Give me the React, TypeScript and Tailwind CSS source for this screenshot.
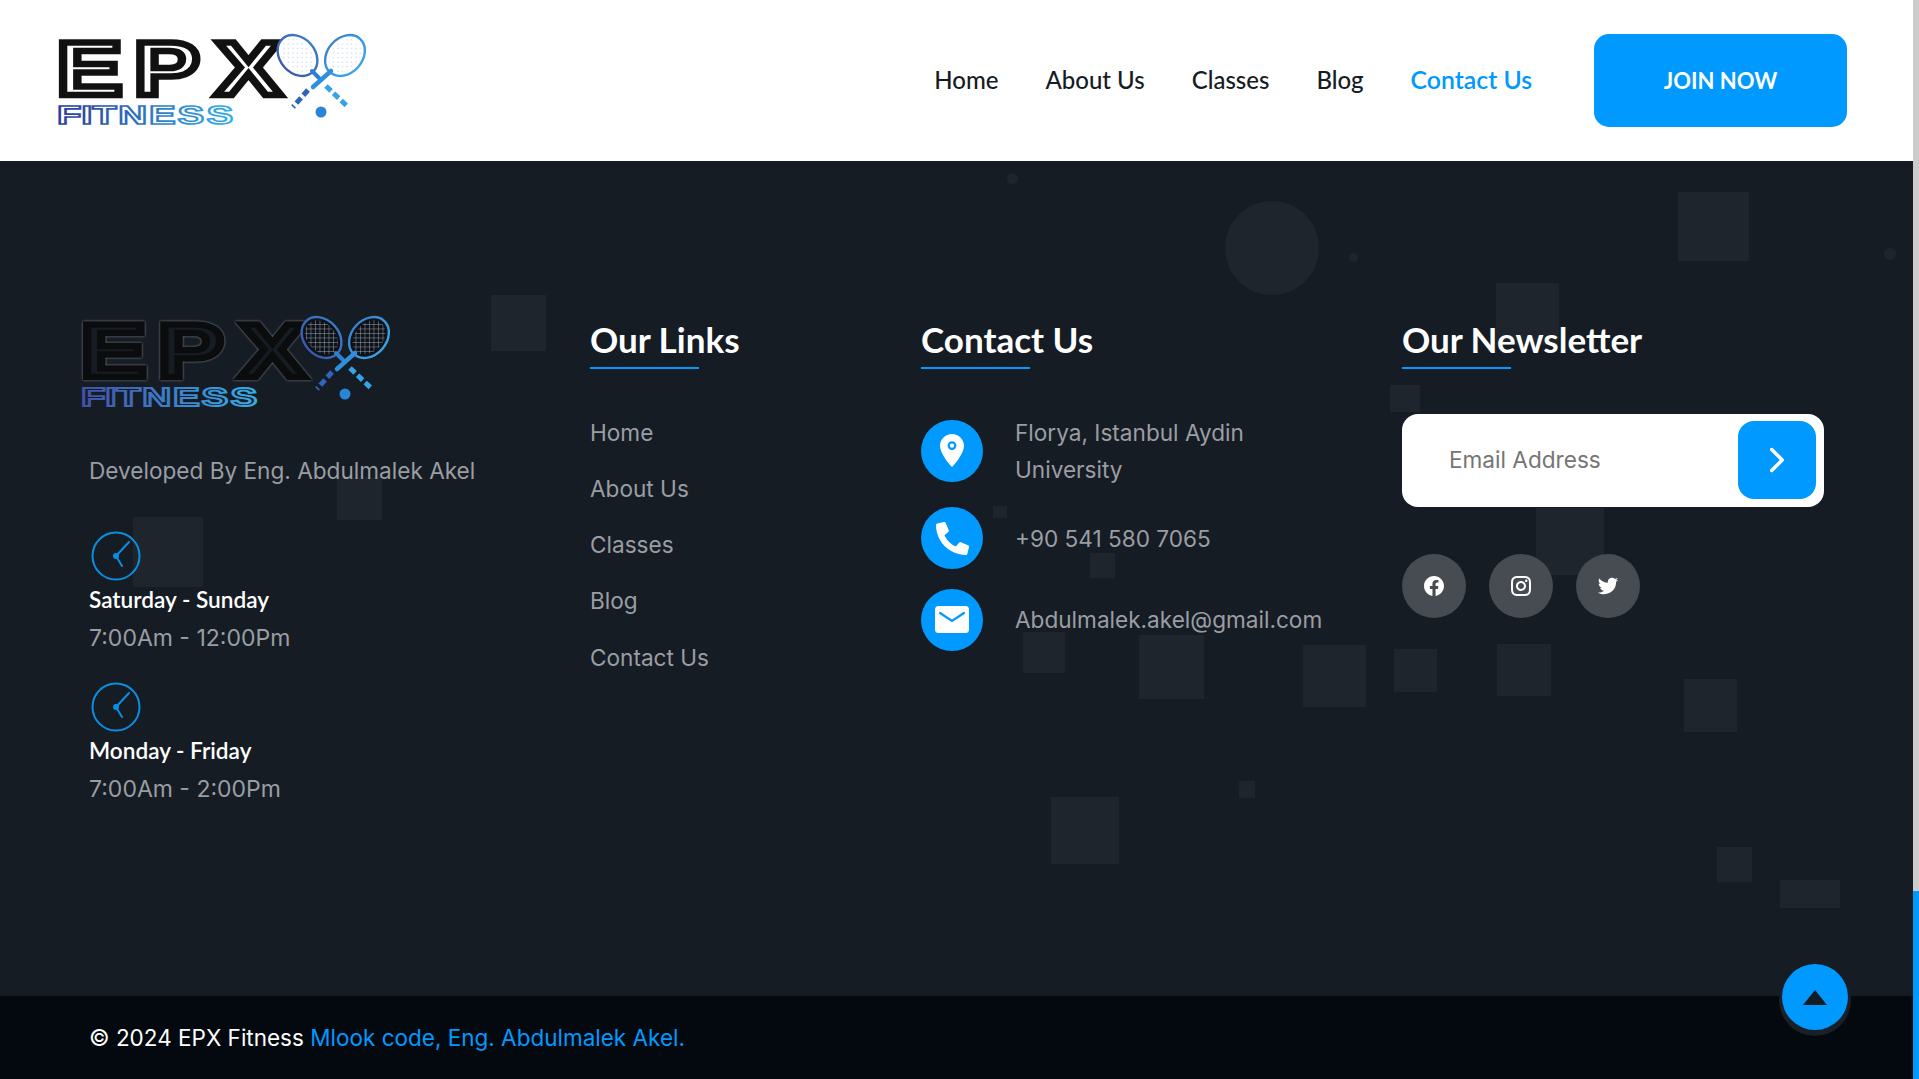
import { ChevronRight } from "lucide-react";
import { FaPhoneAlt } from "react-icons/fa";
import { RiFacebookCircleFill, RiInstagramLine, RiTwitterFill } from "react-icons/ri";

const navLinks = ["Home", "About Us", "Classes", "Blog"];
const footerLinks = ["Home", "About Us", "Classes", "Blog", "Contact Us"];
const body = "font-['Inter','Liberation_Sans',sans-serif]";
const display = "font-['Lato','Noto_Sans',sans-serif]";

// faint squares and dots behind the footer, placed on the section (top = y - 161)
const shapes = [
  "left-[1225px] top-[40px] size-[94px] rounded-full",
  "left-[1007px] top-[12px] size-[11px] rounded-full",
  "left-[1349px] top-[92px] size-[9px] rounded-full",
  "left-[1884px] top-[87px] size-[12px] rounded-full",
  "left-[1678px] top-[31px] w-[71px] h-[69px]",
  "left-[1496px] top-[122px] w-[63px] h-[62px]",
  "left-[491px] top-[134px] w-[55px] h-[56px]",
  "left-[337px] top-[316px] w-[45px] h-[43px]",
  "left-[133px] top-[356px] size-[70px]",
  "left-[1390px] top-[224px] w-[30px] h-[27px]",
  "left-[993px] top-[345px] w-[14px] h-[12px]",
  "left-[1090px] top-[392px] size-[25px]",
  "left-[1023px] top-[471px] w-[42px] h-[41px]",
  "left-[1139px] top-[474px] w-[65px] h-[64px]",
  "left-[1303px] top-[484px] w-[63px] h-[62px]",
  "left-[1394px] top-[488px] w-[43px] h-[43px]",
  "left-[1497px] top-[483px] w-[54px] h-[52px]",
  "left-[1536px] top-[347px] w-[68px] h-[67px]",
  "left-[1684px] top-[518px] w-[53px] h-[53px]",
  "left-[1239px] top-[620px] w-[16px] h-[17px]",
  "left-[1051px] top-[636px] w-[68px] h-[67px]",
  "left-[1717px] top-[686px] w-[35px] h-[35px]",
  "left-[1780px] top-[719px] w-[60px] h-[28px]",
];

function Logo({ dark }: { dark?: boolean }) {
  const id = dark ? "logo-dark" : "logo-light";
  const bg = dark ? "#161c24" : "#fff";
  const wordFont = "'Liberation Sans', sans-serif";
  return (
    <svg width="310" height="95" viewBox="0 0 310 95" className="block shrink-0 overflow-visible">
      <defs>
        {/* gradient runs in the scaled coordinates of the FITNESS group */}
        <linearGradient id={`${id}-fit`} gradientUnits="userSpaceOnUse" x1="0" x2="110" y1="0" y2="0">
          <stop offset="0" stopColor={dark ? "#4250a8" : "#2b3d9c"} />
          <stop offset="1" stopColor="#35aee8" />
        </linearGradient>
        <linearGradient id={`${id}-racket`} gradientUnits="userSpaceOnUse" x1="222" x2="308" y1="0" y2="0">
          <stop offset="0" stopColor="#3a5ab0" />
          <stop offset="1" stopColor="#3aa6e8" />
        </linearGradient>
        <pattern id={`${id}-net`} width="4.500" height="4.500" patternUnits="userSpaceOnUse">
          {dark ? (
            <path d="M0 0H4.500M0 0V4.500" stroke="#a4abb6" strokeWidth="0.900" />
          ) : (
            <circle cx="2" cy="2" r="0.700" fill="#b9cdea" />
          )}
        </pattern>
        <clipPath id={`${id}-clip`}>
          <ellipse cx="240.500" cy="22.500" rx="14" ry="19" transform="rotate(-42 240.500 22.500)" />
          <ellipse cx="288" cy="22.500" rx="14" ry="19" transform="rotate(42 288 22.500)" />
        </clipPath>
      </defs>
      <g transform="scale(1.3 1)">
        <text
          x="-0.300 59 122"
          y="61.750"
          fontSize="76"
          fontWeight="700"
          fontFamily={wordFont}
          fill={bg}
          stroke={dark ? "#0b0c0e" : "#111"}
          strokeWidth="6.500"
          className={dark ? "[filter:drop-shadow(0_0_0.8px_#8a8e94)]" : ""}
        >
          EPX
        </text>
      </g>
      <g transform="scale(1.6 1)">
        <text
          x="0 15.100 22 38.300 57.500 75.250 93.500"
          y="91.500"
          fontSize="25"
          fontWeight="700"
          fontFamily={wordFont}
          fill={bg}
          stroke={`url(#${id}-fit)`}
          strokeWidth={dark ? 1.900 : 1.600}
        >
          FITNESS
        </text>
      </g>
      <g fill={dark ? "#0d1118" : "#fff"} stroke={`url(#${id}-racket)`} strokeWidth="2.400">
        <ellipse cx="240.500" cy="22.500" rx="17.500" ry="22.500" transform="rotate(-42 240.500 22.500)" />
        <ellipse cx="288" cy="22.500" rx="17.500" ry="22.500" transform="rotate(42 288 22.500)" />
      </g>
      <rect x="220" y="0" width="90" height="46" fill={`url(#${id}-net)`} clipPath={`url(#${id}-clip)`} />
      <path d="M255 38L262 45" stroke="#2f7fd0" strokeWidth="4" strokeLinecap="round" />
      <path d="M274 38L256 54" stroke="#2f8fdc" strokeWidth="4.500" strokeLinecap="round" />
      <path d="M251 57L236 74" stroke="#2f63bd" strokeWidth="5" strokeDasharray="7 3.500" />
      <path d="M269 53L291 74" stroke="#36a3e6" strokeWidth="5" strokeDasharray="7 3.500" />
      <circle cx="264" cy="79" r="5.500" fill="#2a84d6" />
    </svg>
  );
}

function ClockIcon() {
  return (
    <svg width="50" height="50" viewBox="0 0 50 50" fill="none" className="block" stroke="#0a8ee0">
      <circle cx="25" cy="25" r="23.500" strokeWidth="2" />
      <path d="M25 25L38 11M25 25L31 35" strokeWidth="2" strokeLinecap="round" />
      <circle cx="25" cy="25" r="3" fill="#0a8ee0" stroke="none" />
    </svg>
  );
}

function PinIcon() {
  return (
    <svg width="24" height="33" viewBox="0 0 24 33">
      <path
        fillRule="evenodd"
        fill="#fff"
        d="M12 0C5.400 0 0 5.300 0 11.800 0 19 8 29 12 33c4-4 12-14 12-21.200C24 5.300 18.600 0 12 0Zm0 7.200a4.400 4.400 0 1 1 0 8.800 4.400 4.400 0 0 1 0-8.800Zm0 2.200a2.200 2.200 0 1 0 0 4.400 2.200 2.200 0 0 0 0-4.400Z"
      />
    </svg>
  );
}

function MailIcon() {
  return (
    <svg width="34" height="27" viewBox="0 0 34 27">
      <rect width="34" height="27" rx="3.500" fill="#fff" />
      <path d="M5 7L17 15L29 7" fill="none" stroke="#0099ff" strokeWidth="2.200" strokeLinecap="round" />
    </svg>
  );
}

function Heading({ children }: { children: string }) {
  return (
    <div className="w-fit">
      <h3 className={`${display} h-[54px] text-[35px] leading-[52px] font-bold whitespace-nowrap text-white`}>{children}</h3>
      <div className="h-[2px] w-[109px] bg-[#0099ff]" />
    </div>
  );
}

function Hours({ days, time }: { days: string; time: string }) {
  return (
    <div>
      <ClockIcon />
      <p className={`${display} mt-[3px] text-[22.600px] leading-[32px] font-semibold text-white`}>{days}</p>
      <p className={`${body} mt-[4px] text-[23px] leading-[37px] text-[#9a9ea3]`}>{time}</p>
    </div>
  );
}

function ContactRow({ icon, children }: { icon: React.ReactNode; children: React.ReactNode }) {
  return (
    <div className="flex items-center gap-[32px]">
      <span className="flex size-[62px] shrink-0 items-center justify-center rounded-full bg-[#0099ff] text-white">{icon}</span>
      <p className={`${body} text-[22.600px] leading-[37px] text-[#9a9ea3]`}>{children}</p>
    </div>
  );
}

export default function App() {
  return (
    <div className="flex h-[1079px] w-full overflow-hidden bg-[#161c24]">
      <div className="relative w-[1913px] shrink-0">
        <header className="flex h-[161px] items-center justify-between bg-white pr-[66px] pl-[57px]">
          <Logo />
          <div className="flex items-center gap-[62px]">
            <nav className={`${display} -mt-[2px] flex items-baseline gap-[47px] text-[24px] font-medium text-[#161c24]`}>
              {navLinks.map((link) => (
                <a key={link} href="#">{link}</a>
              ))}
              <a href="#" className="text-[24.800px] font-semibold text-[#0099ff]">Contact Us</a>
            </nav>
            <a href="#" className={`${display} flex h-[93px] w-[253px] items-center justify-center rounded-[15px] bg-[#0099ff] text-[22px] font-bold text-white`}>
              JOIN NOW
            </a>
          </div>
        </header>

        <section className="relative h-[835px] overflow-hidden bg-[#161c24]">
          {shapes.map((shape) => (
            <div key={shape} className={`absolute bg-[#1e252c] ${shape}`} />
          ))}
          <div className="relative grid grid-cols-[501px_331px_481px_422px] pt-[152px] pl-[89px]">
            <div>
              <div className="-ml-[8px] pt-[2px]"><Logo dark /></div>
              <p className={`${body} mt-[41.500px] text-[22.600px] leading-[37px] text-[#9a9ea3]`}>Developed By Eng. Abdulmalek Akel</p>
              <div className="mt-[42px] ml-[1.500px] flex flex-col gap-[25.500px] [&_p]:-ml-[1.500px]">
                <Hours days="Saturday - Sunday" time="7:00Am - 12:00Pm" />
                <Hours days="Monday - Friday" time="7:00Am - 2:00Pm" />
              </div>
            </div>

            <div>
              <Heading>Our Links</Heading>
              <ul className={`${body} mt-[44.500px] flex flex-col gap-[19.300px] text-[22.600px] leading-[37px] text-[#9a9ea3]`}>
                {footerLinks.map((link) => (
                  <li key={link}><a href="#">{link}</a></li>
                ))}
              </ul>
            </div>

            <div>
              <Heading>Contact Us</Heading>
              <div className="mt-[44.500px] flex w-[420px] flex-col gap-[19.500px]">
                <ContactRow icon={<PinIcon />}>Florya, Istanbul Aydin<br />University</ContactRow>
                <ContactRow icon={<FaPhoneAlt className="size-[33px]" />}>+90 541 580 7065</ContactRow>
                <ContactRow icon={<MailIcon />}>Abdulmalek.akel@gmail.com</ContactRow>
              </div>
            </div>

            <div>
              <Heading>Our Newsletter</Heading>
              <div className="mt-[44.500px] flex h-[93px] items-center justify-between rounded-[16px] bg-white pr-[8px] pl-[47px]">
                <span className="font-['Inter',sans-serif] text-[22.600px] text-[#757575]">Email Address</span>
                <button className="flex size-[78px] items-center justify-center rounded-[16px] bg-[#0099ff] text-white">
                  <ChevronRight className="size-[42px]" strokeWidth={2} />
                </button>
              </div>
              <div className="mt-[47px] flex gap-[23px]">
                {[RiFacebookCircleFill, RiInstagramLine, RiTwitterFill].map((Icon, i) => (
                  <a key={i} href="#" className="flex size-[64px] items-center justify-center rounded-full bg-[#474b52] text-white">
                    <Icon className="size-[24px]" />
                  </a>
                ))}
              </div>
            </div>
          </div>
        </section>

        <footer className={`${body} flex h-[83px] items-center bg-[#03090e] pl-[89px] text-[22.500px] text-white`}>
          <p>© 2024 EPX Fitness <a href="#" className="text-[#0099ff]">Mlook code, Eng. Abdulmalek Akel.</a></p>
        </footer>

        <button className="absolute top-[964px] left-[1782px] flex size-[66px] items-center justify-center rounded-full bg-[#0099ff] shadow-[0_3px_0_3px_#1a2027]">
          <svg width="24" height="15" viewBox="0 0 24 15"><path d="M12 0L24 15H0Z" fill="#161c24" /></svg>
        </button>
      </div>

      {/* page scrollbar */}
      <div className="flex h-full w-[6px] flex-col justify-end bg-[#cccccc]">
        <div className="h-[188px] bg-[#0099ff]" />
      </div>
    </div>
  );
}
